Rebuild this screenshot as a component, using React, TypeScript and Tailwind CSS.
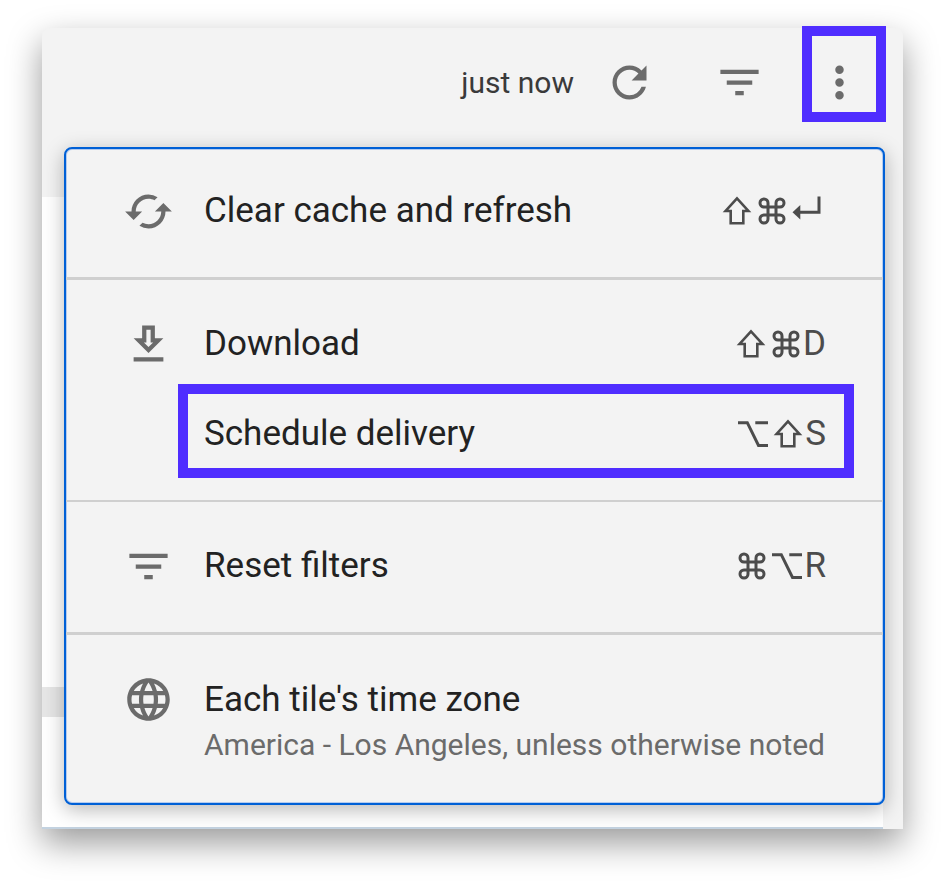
import type { ReactNode } from 'react';
import { MdCached, MdFilterList, MdLanguage, MdMoreVert, MdRefresh } from 'react-icons/md';

const DownloadIcon = () => (
  <svg className="size-[51px]" viewBox="0 0 24 24" fill="currentColor" aria-hidden="true">
    <path d="M13 5v6h1.17L12 13.17 9.83 11H11V5h2m2-2H9v6H5l7 7 7-7h-4V3zm4 15H5v2h14v-2z" />
  </svg>
);

// keyboard modifier icons
const ShiftKey = () => (
  <svg className="h-[30px] w-[30px]" viewBox="0 0 30 30" fill="none" stroke="currentColor" strokeWidth="2.6" role="img" aria-label="Shift">
    <path d="M15 2.4 3.6 15H8.7V27.2H21.3V15H26.4Z" />
  </svg>
);

const CommandKey = () => (
  <svg className="h-[30px] w-[30px]" viewBox="0 0 30 30" fill="none" stroke="currentColor" strokeWidth="3" role="img" aria-label="Command">
    <path d="M19 7v16a4 4 0 1 0 4-4H7a4 4 0 1 0 4 4V7a4 4 0 1 0-4 4h16a4 4 0 1 0-4-4" />
  </svg>
);

const OptionKey = () => (
  <svg className="h-[30px] w-[30px]" viewBox="0 0 30 30" fill="none" stroke="currentColor" strokeWidth="3" role="img" aria-label="Option">
    <path d="M0 3.7h9.3L20.5 26.5H30M17.3 3.7H30" />
  </svg>
);

const ReturnKey = () => (
  <svg className="h-[30px] w-[34px]" viewBox="0 0 34 30" fill="none" stroke="currentColor" strokeWidth="3" role="img" aria-label="Return">
    <path d="M27 .5V16.2H6" />
    <path d="M.5 16.2 8.3 9V23.5Z" fill="currentColor" stroke="none" />
  </svg>
);

type MenuItemProps = {
  label: string;
  icon?: ReactNode;
  shortcut?: ReactNode;
  highlighted?: boolean;
};

const MenuItem = ({ label, icon, shortcut, highlighted }: MenuItemProps) => (
  <button
    type="button"
    role="menuitem"
    className="relative flex h-[90px] w-full items-center gap-[30px] px-[57px] text-left"
  >
    <span className="size-[51px] shrink-0 text-[#6b6b6b]">{icon}</span>
    <span className="flex-1 whitespace-nowrap text-[35px] leading-[42px] text-[#222]">{label}</span>
    <span className="flex items-center text-[35px] leading-[42px] text-[#4c4c4c]">{shortcut}</span>
    {highlighted && (
      <span className="absolute -top-[5px] right-[29px] bottom-px left-28 border-[10px] border-[#4f2dff]" />
    )}
  </button>
);

const Keys = ({ children }: { children: ReactNode }) => (
  <span className="mr-0.5 flex gap-[5px]">{children}</span>
);

const App = () => {
  return (
    <main className="min-h-screen bg-white pt-7 pr-[41px] pb-14 pl-[42px] font-['Roboto',sans-serif]">
      <div className="grid rounded-t-lg bg-[#f3f3f3] shadow-[0_14px_34px_rgba(0,0,0,0.4)]">
        {/* dashboard tiles behind the menu */}
        <div className="col-start-1 row-start-1 mr-5 flex flex-col pt-[169px]">
          <div className="flex-1 bg-white" />
          <div className="h-[30px] bg-[#e6e6e6]" />
          <div className="h-28 border-b-2 border-[#c3d2e0] bg-white" />
        </div>

        <div className="relative col-start-1 row-start-1 pr-[18px] pb-6 pl-[22px]">
          <header className="flex h-[108px] items-center justify-end pr-5 text-[#6b6b6b]">
            <span className="mr-[30px] pt-0.5 text-[30px] leading-9 text-[#3a3a3a]">just now</span>
            <button type="button" aria-label="Refresh" className="mr-[59px]">
              <MdRefresh className="size-[51px]" />
            </button>
            <button type="button" aria-label="Filters" className="mr-[49px]">
              <MdFilterList className="size-[51px]" />
            </button>
            <button type="button" aria-label="Dashboard actions" className="relative">
              <MdMoreVert className="size-[51px]" />
              <span className="absolute -top-[31px] -right-[21px] -bottom-[14px] -left-[12px] border-[10px] border-[#4f2dff]" />
            </button>
          </header>

          <div
            role="menu"
            className="mt-[11px] rounded-lg border-2 border-[#0060d6] bg-[#f3f3f3] shadow-[inset_0_0_0_1px_#b4cbef,0_5px_20px_rgba(0,0,0,0.28)]"
          >
            <div className="border-b-[3px] border-[#cfcfcf] pt-[17px] pb-[21px]">
              <MenuItem
                label="Clear cache and refresh"
                icon={<MdCached className="size-[51px]" />}
                shortcut={
                  <span className="flex gap-[5px]">
                    <ShiftKey />
                    <CommandKey />
                    <ReturnKey />
                  </span>
                }
              />
            </div>
            <div className="border-b-2 border-[#cfcfcf] pt-[19px] pb-[21px]">
              <MenuItem
                label="Download"
                icon={<DownloadIcon />}
                shortcut={<><Keys><ShiftKey /><CommandKey /></Keys>D</>}
              />
              <MenuItem
                label="Schedule delivery"
                shortcut={<><Keys><OptionKey /><ShiftKey /></Keys>S</>}
                highlighted
              />
            </div>
            <div className="border-b-[3px] border-[#cfcfcf] pt-[19px] pb-[21px]">
              <MenuItem
                label="Reset filters"
                icon={<MdFilterList className="size-[51px]" />}
                shortcut={<><Keys><CommandKey /><OptionKey /></Keys>R</>}
              />
            </div>
            <button
              type="button"
              role="menuitem"
              className="flex w-full items-start gap-[30px] px-[57px] pt-[39px] pb-[38px] text-left"
            >
              <MdLanguage className="size-[51px] shrink-0 text-[#6b6b6b]" />
              <span className="whitespace-nowrap">
                <span className="block text-[35px] leading-[51px] text-[#222]">Each tile's time zone</span>
                <span className="block text-[30px] leading-10 text-[#6b6b6b]">
                  America - Los Angeles, unless otherwise noted
                </span>
              </span>
            </button>
          </div>
        </div>
      </div>
    </main>
  );
};

export default App;
